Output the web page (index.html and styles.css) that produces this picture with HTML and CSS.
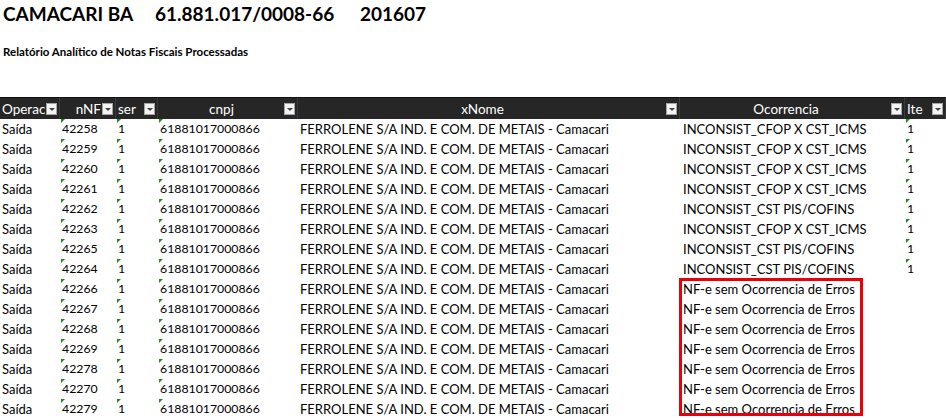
FILE: index.html
```html
<!DOCTYPE html>
<html lang="pt">
<head>
<meta charset="utf-8">
<title>Relatório</title>
<link rel="stylesheet" href="styles.css">
</head>
<body>
<div class="sheet">
  <div class="title">
    <span class="t1">CAMACARI BA</span>
    <span class="t2">61.881.017/0008-66</span>
    <span class="t3">201607</span>
  </div>
  <div class="subtitle">Relatório Analítico de Notas Fiscais Processadas</div>

  <div class="grid" id="grid">
    <div class="hd left"><span class="lbl">Operac</span><span class="fb"></span></div>
    <div class="hd right"><span class="lbl">nNF</span><span class="fb"></span></div>
    <div class="hd left"><span class="lbl">ser</span><span class="fb"></span></div>
    <div class="hd center"><span class="lbl">cnpj</span><span class="fb"></span></div>
    <div class="hd center"><span class="lbl">xNome</span><span class="fb"></span></div>
    <div class="hd center"><span class="lbl">Ocorrencia</span><span class="fb"></span></div>
    <div class="hd left"><span class="lbl">Ite</span><span class="fb"></span></div>

    <div class="c">Saída</div><div class="c tx">42258</div><div class="c tx">1</div><div class="c tx">61881017000866</div><div class="c nm">FERROLENE S/A IND. E COM. DE METAIS - Camacari</div><div class="c oc">INCONSIST_CFOP X CST_ICMS</div><div class="c tx">1</div>
    <div class="c">Saída</div><div class="c tx">42259</div><div class="c tx">1</div><div class="c tx">61881017000866</div><div class="c nm">FERROLENE S/A IND. E COM. DE METAIS - Camacari</div><div class="c oc">INCONSIST_CFOP X CST_ICMS</div><div class="c tx">1</div>
    <div class="c">Saída</div><div class="c tx">42260</div><div class="c tx">1</div><div class="c tx">61881017000866</div><div class="c nm">FERROLENE S/A IND. E COM. DE METAIS - Camacari</div><div class="c oc">INCONSIST_CFOP X CST_ICMS</div><div class="c tx">1</div>
    <div class="c">Saída</div><div class="c tx">42261</div><div class="c tx">1</div><div class="c tx">61881017000866</div><div class="c nm">FERROLENE S/A IND. E COM. DE METAIS - Camacari</div><div class="c oc">INCONSIST_CFOP X CST_ICMS</div><div class="c tx">1</div>
    <div class="c">Saída</div><div class="c tx">42262</div><div class="c tx">1</div><div class="c tx">61881017000866</div><div class="c nm">FERROLENE S/A IND. E COM. DE METAIS - Camacari</div><div class="c oc">INCONSIST_CST PIS/COFINS</div><div class="c tx">1</div>
    <div class="c">Saída</div><div class="c tx">42263</div><div class="c tx">1</div><div class="c tx">61881017000866</div><div class="c nm">FERROLENE S/A IND. E COM. DE METAIS - Camacari</div><div class="c oc">INCONSIST_CFOP X CST_ICMS</div><div class="c tx">1</div>
    <div class="c">Saída</div><div class="c tx">42265</div><div class="c tx">1</div><div class="c tx">61881017000866</div><div class="c nm">FERROLENE S/A IND. E COM. DE METAIS - Camacari</div><div class="c oc">INCONSIST_CST PIS/COFINS</div><div class="c tx">1</div>
    <div class="c">Saída</div><div class="c tx">42264</div><div class="c tx">1</div><div class="c tx">61881017000866</div><div class="c nm">FERROLENE S/A IND. E COM. DE METAIS - Camacari</div><div class="c oc">INCONSIST_CST PIS/COFINS</div><div class="c tx">1</div>
    <div class="c">Saída</div><div class="c tx">42266</div><div class="c tx">1</div><div class="c tx">61881017000866</div><div class="c nm">FERROLENE S/A IND. E COM. DE METAIS - Camacari</div><div class="c oc">NF-e sem Ocorrencia de Erros</div><div class="c"></div>
    <div class="c">Saída</div><div class="c tx">42267</div><div class="c tx">1</div><div class="c tx">61881017000866</div><div class="c nm">FERROLENE S/A IND. E COM. DE METAIS - Camacari</div><div class="c oc">NF-e sem Ocorrencia de Erros</div><div class="c"></div>
    <div class="c">Saída</div><div class="c tx">42268</div><div class="c tx">1</div><div class="c tx">61881017000866</div><div class="c nm">FERROLENE S/A IND. E COM. DE METAIS - Camacari</div><div class="c oc">NF-e sem Ocorrencia de Erros</div><div class="c"></div>
    <div class="c">Saída</div><div class="c tx">42269</div><div class="c tx">1</div><div class="c tx">61881017000866</div><div class="c nm">FERROLENE S/A IND. E COM. DE METAIS - Camacari</div><div class="c oc">NF-e sem Ocorrencia de Erros</div><div class="c"></div>
    <div class="c">Saída</div><div class="c tx">42278</div><div class="c tx">1</div><div class="c tx">61881017000866</div><div class="c nm">FERROLENE S/A IND. E COM. DE METAIS - Camacari</div><div class="c oc">NF-e sem Ocorrencia de Erros</div><div class="c"></div>
    <div class="c">Saída</div><div class="c tx">42270</div><div class="c tx">1</div><div class="c tx">61881017000866</div><div class="c nm">FERROLENE S/A IND. E COM. DE METAIS - Camacari</div><div class="c oc">NF-e sem Ocorrencia de Erros</div><div class="c"></div>
    <div class="c">Saída</div><div class="c tx">42279</div><div class="c tx">1</div><div class="c tx">61881017000866</div><div class="c nm">FERROLENE S/A IND. E COM. DE METAIS - Camacari</div><div class="c oc">NF-e sem Ocorrencia de Erros</div><div class="c"></div>

    <div class="redbox"></div>
  </div>
</div>
</body>
</html>
```
FILE: styles.css
```css
html, body {
  margin: 0;
  padding: 0;
  background: #ffffff;
}
body {
  font-family: Lato, "Open Sans", sans-serif;
  color: #000000;
  width: 946px;
  height: 418px;
  overflow: hidden;
}
.sheet {
  display: flex;
  flex-direction: column;
}
.title {
  display: flex;
  align-items: baseline;
  height: 28px;
  padding-left: 3px;
  font-weight: 700;
  font-size: 19px;
  line-height: 28px;
}
.t1 { width: 152px; }
.t2 { width: 205px; }
.subtitle {
  margin-top: 16px;
  padding-left: 3px;
  font-size: 11.5px;
  font-weight: 700;
  line-height: 16px;
  height: 16px;
}
.grid {
  position: relative;
  margin-top: 37px;
  display: grid;
  grid-template-columns: 60px 56px 42px 140px 382px 225px 41px;
  grid-template-rows: 22px;
  grid-auto-rows: 20px;
  font-size: 13px;
  line-height: 20px;
}
.hd {
  background: #262626;
  color: #ffffff;
  display: flex;
  align-items: center;
  padding: 0 2px 0 2px;
  overflow: hidden;
  border-right: 1px solid #3a3a3a;
  border-top: 1px solid #111;
  font-size: 13.5px;
}
.hd .lbl {
  flex: 1 1 auto;
  overflow: hidden;
  white-space: nowrap;
  min-width: 0;
}
.hd.center .lbl { text-align: center; }
.hd.right .lbl { display: flex; justify-content: flex-end; }
.fb {
  flex: 0 0 auto;
  width: 11px;
  height: 12px;
  margin-left: 1px;
  background: #f3f3f3;
  border: 1px solid #a6a6a6;
  box-sizing: border-box;
  position: relative;
}
.fb::after {
  content: "";
  position: absolute;
  left: 2px;
  top: 4px;
  border-left: 3px solid transparent;
  border-right: 3px solid transparent;
  border-top: 3px solid #444;
}
.c {
  white-space: nowrap;
  overflow: hidden;
  padding-left: 2px;
  position: relative;
}
.tx {
  font-size: 12.3px;
}
.tx::before {
  content: "";
  position: absolute;
  left: 1px;
  top: 0;
  border-top: 4px solid #1e8c1e;
  border-right: 4px solid transparent;
}
.c:empty::before { display: none; }
.oc { padding-left: 3px; }
.redbox {
  position: absolute;
  grid-column: 6;
  grid-row: 10 / span 7;
  left: -1px;
  top: -1px;
  width: 184px;
  height: 138px;
  border: 3px solid #e8000b;
  box-sizing: border-box;
  pointer-events: none;
}
```
